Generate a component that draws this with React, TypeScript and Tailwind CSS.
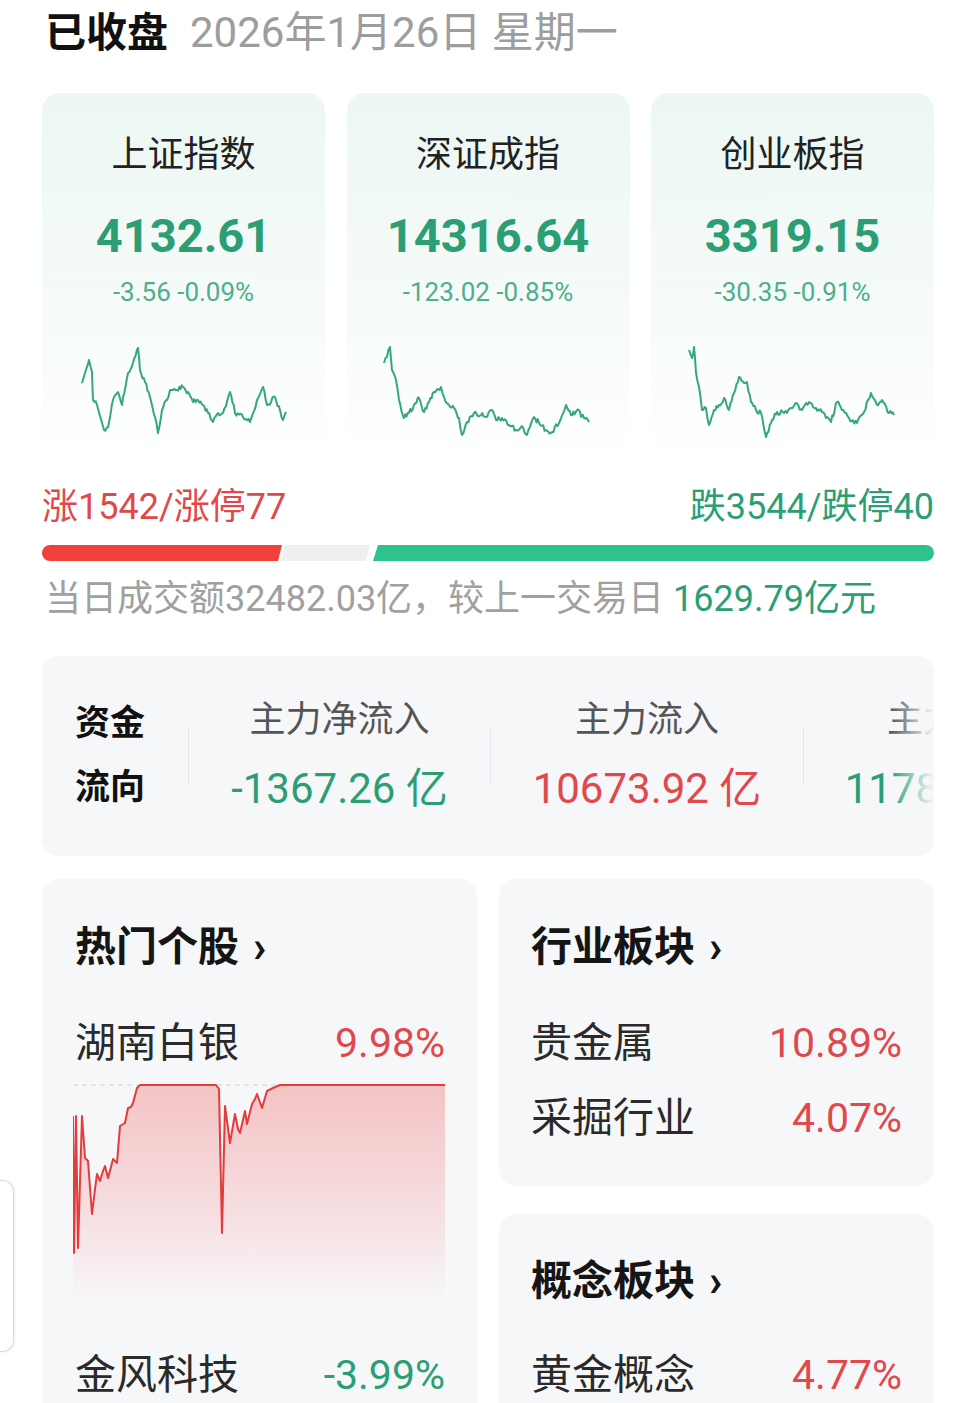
import React from "react";

type P = [number, number];

function mulberry(seed: number) {
  let a = seed >>> 0;
  return () => {
    a = (a + 0x6d2b79f5) >>> 0;
    let t = a;
    t = Math.imul(t ^ (t >>> 15), t | 1);
    t ^= t + Math.imul(t ^ (t >>> 7), t | 61);
    return ((t ^ (t >>> 14)) >>> 0) / 4294967296;
  };
}

function jagged(points: P[], seed: number, amp = 4): string {
  const rnd = mulberry(seed);
  const out: P[] = [];
  for (let i = 0; i < points.length - 1; i++) {
    const [x0, y0] = points[i];
    const [x1, y1] = points[i + 1];
    const n = Math.max(2, Math.round((x1 - x0) / 1.3));
    for (let k = 0; k < n; k++) {
      const t = k / n;
      const x = x0 + (x1 - x0) * t;
      let y = y0 + (y1 - y0) * t;
      if (k > 0) y += (rnd() - 0.5) * amp;
      out.push([x, y]);
    }
  }
  out.push(points[points.length - 1]);
  return out.map((p, i) => `${i ? "L" : "M"}${p[0].toFixed(1)},${p[1].toFixed(1)}`).join(" ");
}

const spark1: P[] = [[6,43],[9,33],[13,20],[16,32],[17,60],[21,65],[28,90],[32,87],[37,60],[42,52],[46,65],[52,33],[57,23],[62,8],[64,30],[69,42],[74,57],[79,77],[82,93],[86,70],[91,60],[94,50],[101,50],[107,47],[112,52],[117,62],[122,60],[127,65],[132,73],[137,82],[142,73],[147,73],[154,52],[159,73],[167,77],[174,82],[181,60],[187,47],[191,65],[199,57],[204,70],[207,80],[210,72]];
const spark2: P[] = [[4,23],[7,17],[10,7],[12,30],[16,40],[19,60],[24,78],[29,73],[34,65],[39,58],[44,72],[49,62],[54,52],[61,47],[64,57],[69,65],[74,68],[79,78],[82,95],[87,82],[94,73],[101,75],[106,77],[111,70],[116,80],[122,78],[129,85],[136,90],[141,87],[147,95],[154,77],[159,83],[166,90],[172,92],[179,83],[186,65],[191,75],[197,70],[204,78],[209,82]];
const spark3: P[] = [[4,10],[7,18],[9,7],[11,33],[14,47],[17,70],[21,68],[24,85],[29,70],[34,65],[39,58],[44,70],[49,53],[54,37],[59,43],[62,42],[66,62],[71,70],[76,73],[81,97],[86,83],[92,72],[99,73],[106,68],[111,63],[117,70],[124,62],[131,68],[137,72],[146,82],[152,62],[157,70],[164,78],[172,83],[179,72],[186,53],[192,65],[197,60],[204,73],[209,75]];

const hotChart: P[] = [[0,35],[1,172],[3,35],[5,167],[9,35],[12,77],[15,80],[19,133],[22,108],[24,93],[27,100],[30,90],[32,85],[35,97],[38,86],[40,78],[44,82],[47,45],[52,42],[55,27],[58,26],[60,22],[64,7],[67,4],[143,4],[146,8],[149,152],[152,25],[157,62],[162,33],[165,48],[167,52],[172,30],[174,43],[179,23],[182,18],[184,13],[189,27],[194,10],[200,7],[207,4],[372,4]];

const F = "font-['Roboto','Noto_Sans_CJK_SC',sans-serif]";

function IndexCard({ name, value, change, pts, seed }: { name: string; value: string; change: string; pts: P[]; seed: number }) {
  return (
    <div className="flex h-[370px] w-[283px] flex-col items-center rounded-[18px] bg-gradient-to-b from-[#ecf7f2] via-[#f6fbf9] via-60% to-white pt-[40px]">
      <div className="text-[36px] leading-[44px] text-[#222]">{name}</div>
      <div className="mt-[31px] text-[47px] font-bold leading-[56px] text-[#2b9e74]">{value}</div>
      <div className="mt-[13px] text-[26px] leading-[30px] text-[#4fae8b]">{change}</div>
      <svg width="216" height="105" viewBox="0 0 216 105" className="mt-[33px]">
        <path d={jagged(pts, seed, 5)} fill="none" stroke="#34a77d" strokeWidth="2" strokeLinejoin="round" />
      </svg>
    </div>
  );
}

function Row({ name, pct, color, className }: { name: string; pct: string; color: string; className?: string }) {
  return (
    <div className={`flex items-center justify-between text-[41px] leading-[48px] ${className ?? ""}`}>
      <span className="text-[#2a2a2a]">{name}</span>
      <span className={color}>{pct}</span>
    </div>
  );
}

function Title({ children }: { children: React.ReactNode }) {
  return (
    <div className="flex items-center text-[41px] font-bold leading-[48px] text-[#151515]">
      <span>{children}</span>
      <span className="ml-[14px] text-[44px] font-bold">›</span>
    </div>
  );
}

export default function App() {
  const chartPath = hotChart.map((p, i) => `${i ? "L" : "M"}${p[0]},${p[1]}`).join(" ");
  const fillPath = `${chartPath} L372,220 L0,220 Z`;
  return (
    <div className={`relative h-[1403px] w-[977px] overflow-hidden bg-white pl-[42px] pr-[43px] ${F}`}>
      {/* header */}
      <div className="flex items-center pl-[3px] pt-[9px] leading-[48px]">
        <span className="text-[41px] font-bold text-[#111]">已收盘</span>
        <span className="ml-[22px] text-[42px] text-[#9d9d9d]">2026年1月26日 星期一</span>
      </div>

      {/* index cards */}
      <div className="mt-[36px] flex justify-between">
        <IndexCard name="上证指数" value="4132.61" change="-3.56 -0.09%" pts={spark1} seed={11} />
        <IndexCard name="深证成指" value="14316.64" change="-123.02 -0.85%" pts={spark2} seed={23} />
        <IndexCard name="创业板指" value="3319.15" change="-30.35 -0.91%" pts={spark3} seed={37} />
      </div>

      {/* breadth */}
      <div className="mt-[24px] flex items-center justify-between text-[36px] leading-[40px]">
        <span className="text-[#e0494b]">涨1542/涨停77</span>
        <span className="text-[#2b9e74]">跌3544/跌停40</span>
      </div>
      <svg width="892" height="16" viewBox="0 0 892 16" className="mt-[18px] block">
        <path d="M8,0 H240 L236,16 H8 A8,8 0 0 1 8,0 Z" fill="#f2413b" />
        <path d="M243,0 H328 L324,16 H239 Z" fill="#efeff1" />
        <path d="M336,0 H884 A8,8 0 0 1 884,16 H331 Z" fill="#2ec28c" />
      </svg>
      <div className="mt-[18px] pl-[3px] text-[36px] leading-[40px] text-[#a0a0a0]">
        当日成交额32482.03亿，较上一交易日 <span className="text-[#2b9e74]">1629.79亿元</span>
      </div>

      {/* funds flow */}
      <div className="relative mt-[37px] flex h-[200px] items-center overflow-hidden rounded-[18px] bg-[#f6f7f9]">
        <div className="flex w-[146px] shrink-0 flex-col pl-[33px] text-[35px] font-bold leading-[64px] text-[#111]">
          <span>资金</span>
          <span>流向</span>
        </div>
        <div className="h-[56px] w-px shrink-0 bg-[#e4e5e8]" />
        <div className="flex w-[301px] shrink-0 flex-col items-center">
          <span className="text-[36px] leading-[44px] text-[#555]">主力净流入</span>
          <span className="mt-[21px] text-[42px] leading-[52px] text-[#2b9e74]">-1367.26 亿</span>
        </div>
        <div className="h-[56px] w-px shrink-0 bg-[#e4e5e8]" />
        <div className="flex w-[312px] shrink-0 flex-col items-center">
          <span className="text-[36px] leading-[44px] text-[#555]">主力流入</span>
          <span className="mt-[21px] text-[42px] leading-[52px] text-[#e0494b]">10673.92 亿</span>
        </div>
        <div className="h-[56px] w-px shrink-0 bg-[#e4e5e8]" />
        <div className="flex w-[310px] shrink-0 flex-col items-center">
          <span className="text-[36px] leading-[44px] text-[#555]">主力流出</span>
          <span className="mt-[21px] text-[42px] leading-[52px] text-[#2b9e74]">11786.18 亿</span>
        </div>
        <div className="absolute right-0 top-0 h-full w-[44px] bg-gradient-to-r from-[#f6f7f9]/0 to-[#f6f7f9]" />
      </div>

      {/* bottom cards */}
      <div className="mt-[23px] flex justify-between">
        <div className="h-[600px] w-[435px] rounded-[18px] bg-[#f6f7f9] pl-[33px] pr-[32px] pt-[44px]">
          <Title>热门个股</Title>
          <Row className="mt-[48px]" name="湖南白银" pct="9.98%" color="text-[#e0494b]" />
          <svg width="374" height="220" viewBox="0 0 374 220" className="-ml-[2px] mt-[14px] block">
            <defs>
              <linearGradient id="hotfill" x1="0" y1="0" x2="0" y2="1">
                <stop offset="0" stopColor="#f4c3c4" />
                <stop offset="0.6" stopColor="#f6dfe1" />
                <stop offset="1" stopColor="#f6f7f9" />
              </linearGradient>
            </defs>
            <line x1="0" y1="4" x2="372" y2="4" stroke="#d2d2d2" strokeWidth="1" strokeDasharray="5 4" />
            <path d={fillPath} fill="url(#hotfill)" />
            <path d={chartPath} fill="none" stroke="#e23c3c" strokeWidth="2" strokeLinejoin="round" />
          </svg>
          <Row className="mt-[50px]" name="金风科技" pct="-3.99%" color="text-[#2b9e74]" />
        </div>
        <div className="flex w-[435px] flex-col">
          <div className="h-[307px] rounded-[18px] bg-[#f6f7f9] pl-[32px] pr-[32px] pt-[44px]">
            <Title>行业板块</Title>
            <Row className="mt-[48px]" name="贵金属" pct="10.89%" color="text-[#e0494b]" />
            <Row className="mt-[27px]" name="采掘行业" pct="4.07%" color="text-[#e0494b]" />
          </div>
          <div className="mt-[28px] h-[300px] rounded-[18px] bg-[#f6f7f9] pl-[32px] pr-[32px] pt-[43px]">
            <Title>概念板块</Title>
            <Row className="mt-[46px]" name="黄金概念" pct="4.77%" color="text-[#e0494b]" />
          </div>
        </div>
      </div>

      {/* floating edge tab */}
      <div className="absolute left-0 top-[1180px] h-[172px] w-[14px] rounded-r-[12px] border border-l-0 border-[#dcdcdc] bg-white shadow-[1px_0_3px_rgba(0,0,0,0.08)]" />
    </div>
  );
}
